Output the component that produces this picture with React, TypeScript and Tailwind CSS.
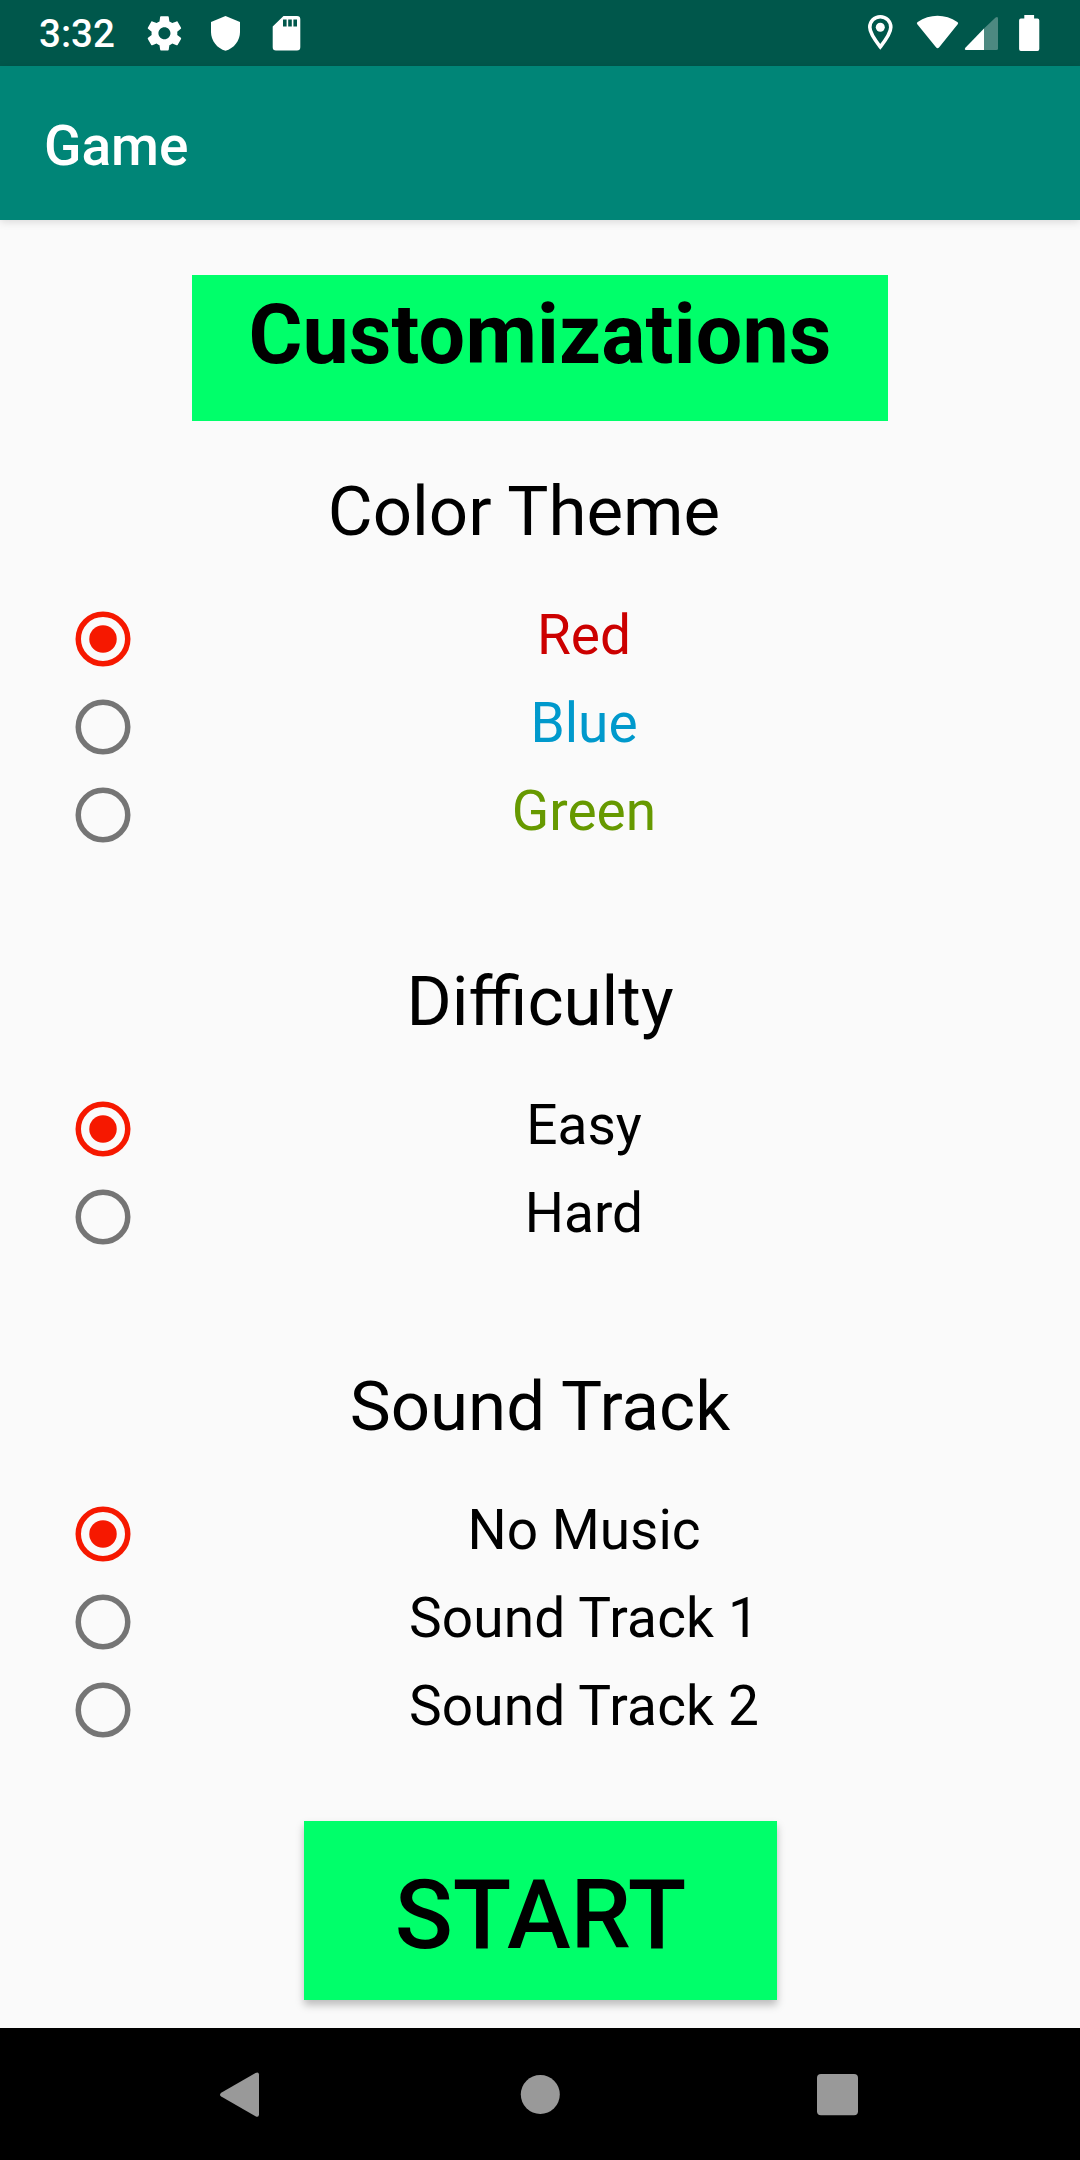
import React, { useState } from "react";

const RED = "#f61800";

function StatusBar() {
  return (
    <header className="flex h-[66px] shrink-0 items-center justify-between bg-[#00574b] text-white">
      <div className="flex items-center">
        <span className="ml-[39px] w-[101px] text-[38.5px] leading-[66px] font-medium">
          <span className="relative top-[1px]">3:32</span>
        </span>
        <svg className="h-[66px] w-[180px]" viewBox="140 0 180 66" fill="currentColor">
          <path
            transform="translate(143.8 12.7) scale(1.72)"
            d="M19.43 12.98c.04-.32.07-.64.07-.98s-.03-.66-.07-.98l2.11-1.65c.19-.15.24-.42.12-.64l-2-3.46c-.12-.22-.39-.3-.61-.22l-2.49 1c-.52-.4-1.08-.73-1.69-.98l-.38-2.65C14.46 2.18 14.25 2 14 2h-4c-.25 0-.46.18-.49.42l-.38 2.65c-.61.25-1.17.59-1.69.98l-2.49-1c-.23-.09-.49 0-.61.22l-2 3.46c-.13.22-.07.49.12.64l2.11 1.65c-.04.32-.07.65-.07.98s.03.66.07.98l-2.11 1.65c-.19.15-.24.42-.12.64l2 3.46c.12.22.39.3.61.22l2.49-1c.52.4 1.08.73 1.69.98l.38 2.65c.03.24.24.42.49.42h4c.25 0 .46-.18.49-.42l.38-2.65c.61-.25 1.17-.59 1.69-.98l2.49 1c.23.09.49 0 .61-.22l2-3.46c.12-.22.07-.49-.12-.64l-2.11-1.65zM12 15.5c-1.93 0-3.5-1.57-3.5-3.5s1.57-3.5 3.5-3.5 3.5 1.57 3.5 3.5-1.57 3.5-3.5 3.5z"
          />
          <path d="M225.500 16L211 22V32c0 8.700 6.200 16.600 14.500 18.700C233.800 48.600 240 40.700 240 32V22Z" />
          <path
            fillRule="evenodd"
            d="M283.500 16H297a3.300 3.300 0 0 1 3.300 3.300V47.300a3.300 3.300 0 0 1-3.300 3.300H276a3.300 3.300 0 0 1-3.300-3.300V26.500ZM283 19.500v7h3.600v-7ZM288.200 19.500v7h3.600v-7ZM293.400 19.500v7h3.600v-7Z"
          />
        </svg>
      </div>
      <svg className="h-[66px] w-[220px]" viewBox="860 0 220 66" fill="currentColor">
        <path
          d="M880.300 16.800c-6 0-10.500 4.600-10.500 10.500 0 6.300 6.200 14.100 10.500 19.600 4.300-5.500 10.500-13.300 10.500-19.600 0-5.900-4.500-10.500-10.500-10.500Z"
          fill="none"
          stroke="currentColor"
          strokeWidth="3.600"
        />
        <circle cx="880.300" cy="27.300" r="4.500" />
        <path d="M917.300 24.300q-1.200-1.400.4-2.400c12-8.300 27.600-8.300 39.600 0q1.600 1 .4 2.400L939 47.500q-1.400 1.500-2.800 0Z" />
        <path d="M984 28.500V50H966q-2 0-.6-2.200Z" />
        <path opacity=".3" d="M984 28.500L995.600 17.500q2.400-1.500 2.400 1V48.500q0 1.500-1.500 1.500H984Z" />
        <path d="M1024.300 15h9.800v3.600h3.400q1.800 0 1.800 1.800V49q0 1.900-1.800 1.900h-16.600q-1.800 0-1.800-1.900V20.400q0-1.800 1.800-1.800h3.400Z" />
      </svg>
    </header>
  );
}

type Option = { label: string; textClass?: string };

function RadioSection({
  title,
  titleClass = "",
  options,
}: {
  title: string;
  titleClass?: string;
  options: Option[];
}) {
  const [selected, setSelected] = useState(0);
  return (
    <section className="flex flex-col">
      <h2 className={`mb-[43px] text-center text-[69px] leading-[80px] ${titleClass}`}>{title}</h2>
      <div role="radiogroup" aria-label={title} className="flex flex-col">
        {options.map((o, i) => (
          <button
            key={o.label}
            role="radio"
            aria-checked={selected === i}
            onClick={() => setSelected(i)}
            className="mx-[59px] flex h-[88px] items-start"
          >
            <svg className="size-[88px] shrink-0" viewBox="0 0 88 88" fill="none">
              <circle cx="44" cy="44" r="24.750" strokeWidth="5.500" stroke={selected === i ? RED : "#757575"} />
              {selected === i && <circle cx="44" cy="44" r="13.750" fill={RED} />}
            </svg>
            <span className={`flex-1 text-center text-[55px] leading-[80px] ${o.textClass ?? "text-black"}`}>
              {o.label}
            </span>
          </button>
        ))}
      </div>
    </section>
  );
}

function NavigationBar() {
  return (
    <nav className="flex h-[132px] shrink-0 items-center justify-between bg-black px-[210px] text-[#999999]">
      <svg className="size-[60px]" viewBox="0 0 60 60" fill="currentColor">
        <path d="M11.200 32.600q-2.400-1.800 0-3.800L45.500 8.900q3.300-1.600 3.500 1.700V50.600q-.2 3.300-3.500 1.700Z" />
      </svg>
      <svg className="size-[60px]" viewBox="0 0 60 60" fill="currentColor">
        <circle cx="30.300" cy="30.500" r="19.500" />
      </svg>
      <svg className="size-[60px]" viewBox="0 0 60 60" fill="currentColor">
        <rect x="7" y="10" width="41" height="41.300" rx="4" />
      </svg>
    </nav>
  );
}

export default function App() {
  return (
    <div className="flex h-[2160px] w-[1080px] flex-col overflow-hidden bg-[#fafafa] font-['Roboto',sans-serif] text-black">
      <StatusBar />
      <div className="z-10 flex h-[154px] shrink-0 items-center bg-[#008577] px-[44px] shadow-[0_2px_8px_rgba(0,0,0,0.13)]">
        <h1 className="text-[55px] leading-[64px] font-medium text-white">
          <span className="relative top-[3px]">Game</span>
        </h1>
      </div>
      <main className="flex flex-1 flex-col">
        <div className="mx-auto mt-[55px] h-[146px] w-[696px] bg-[#00ff6a] pt-[11px] text-center text-[82.5px] leading-[97px] font-bold tracking-[0.2px]">
          Customizations
        </div>
        <div className="mt-[51px]">
          <RadioSection
            title="Color Theme"
            titleClass="pr-[32px]"
            options={[
              { label: "Red", textClass: "text-[#cc0000]" },
              { label: "Blue", textClass: "text-[#0099cc]" },
              { label: "Green", textClass: "text-[#669900]" },
            ]}
          />
        </div>
        <div className="mt-[103px]">
          <RadioSection title="Difficulty" options={[{ label: "Easy" }, { label: "Hard" }]} />
        </div>
        <div className="mt-[106px]">
          <RadioSection
            title="Sound Track"
            options={[
              { label: "No Music" },
              { label: "Sound Track 1", textClass: "tracking-[0.18px]" },
              { label: "Sound Track 2", textClass: "tracking-[0.18px]" },
            ]}
          />
        </div>
        <button className="ml-[304px] mt-[67px] h-[179px] w-[473px] bg-[#00ff6a] text-[96px] leading-[113px] font-medium shadow-[0_5px_8px_rgba(0,0,0,0.25)]">
          <span className="relative top-[5px]">START</span>
        </button>
      </main>
      <NavigationBar />
    </div>
  );
}
